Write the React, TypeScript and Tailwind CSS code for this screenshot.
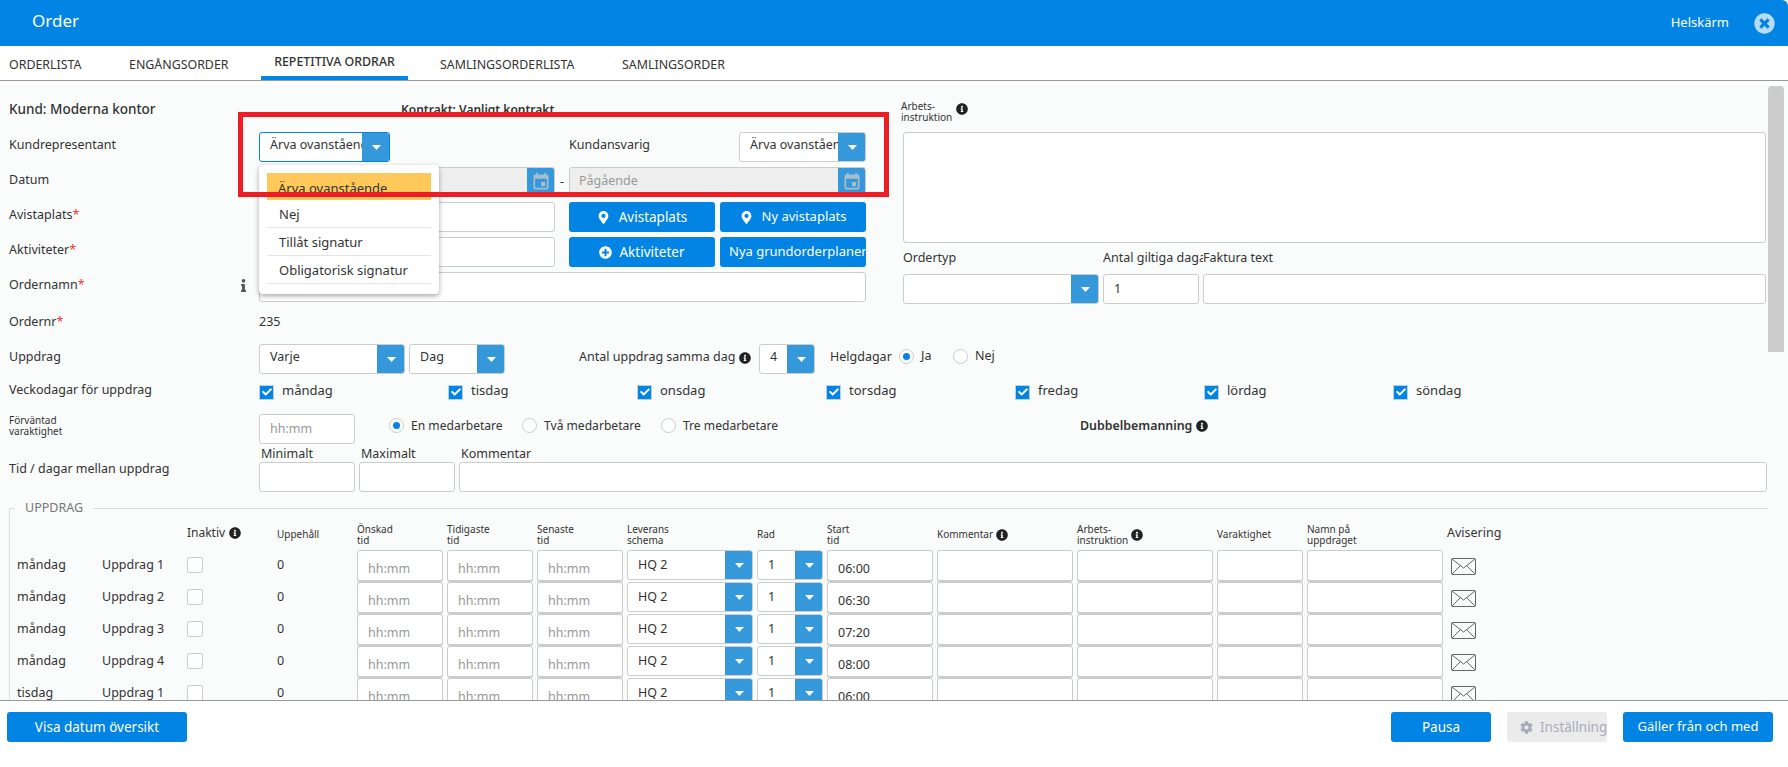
import { FaCheck, FaCog, FaInfo, FaInfoCircle, FaMapMarkerAlt, FaPlusCircle, FaTimesCircle } from "react-icons/fa";
import { MdEvent } from "react-icons/md";

const tabs = [
  { label: "ORDERLISTA", className: "ml-[9px] w-[120px]" },
  { label: "ENGÅNGSORDER", className: "w-[132px]" },
  { label: "REPETITIVA ORDRAR", active: true },
  { label: "SAMLINGSORDERLISTA", className: "ml-[32px] w-[182px]" },
  { label: "SAMLINGSORDER", className: "" },
];

const weekdays = ["måndag", "tisdag", "onsdag", "torsdag", "fredag", "lördag", "söndag"];

const missions = [
  { day: "måndag", name: "Uppdrag 1", start: "06:00" },
  { day: "måndag", name: "Uppdrag 2", start: "06:30" },
  { day: "måndag", name: "Uppdrag 3", start: "07:20" },
  { day: "måndag", name: "Uppdrag 4", start: "08:00" },
  { day: "tisdag", name: "Uppdrag 1", start: "06:00" },
];

function Select(props: { text?: string; className: string; focus?: boolean; textClass?: string }) {
  return (
    <div
      className={`flex h-[30px] shrink-0 overflow-hidden rounded-[3px] border bg-white ${
        props.focus ? "border-[#0284e4]" : "border-[#ccc]"
      } ${props.className}`}
    >
      <div className={`min-w-0 flex-1 overflow-hidden whitespace-nowrap pl-[10px] leading-[24px] ${props.textClass ?? ""}`}>
        {props.text}
      </div>
      <div className="-my-px -mr-px flex w-[28px] shrink-0 items-center justify-center bg-[#3598db]">
        <svg width="9" height="5" viewBox="0 0 9 5" fill="#fff">
          <path d="M0 0h9L4.5 5z" />
        </svg>
      </div>
    </div>
  );
}

function Input(props: { className: string; placeholder?: string; value?: string }) {
  return (
    <div
      className={`flex h-[30px] shrink-0 items-center rounded-[3px] border border-[#ccc] bg-white pl-[10px] ${
        props.placeholder ? "text-[#999]" : ""
      } ${props.className}`}
    >
      {props.placeholder ?? props.value}
    </div>
  );
}

function DateField(props: { text?: string; className: string }) {
  return (
    <div className={`flex h-[30px] shrink-0 overflow-hidden rounded-[3px] border border-[#ccc] bg-[#eee] ${props.className}`}>
      <div className="flex-1 pl-[9px] leading-[26px] text-[#999]">{props.text}</div>
      <div className="-my-px -mr-px flex w-[28px] items-center justify-center bg-[#3598db] text-[#a9bcc9]">
        <MdEvent size={20} />
      </div>
    </div>
  );
}

function BlueButton(props: { children: React.ReactNode; className: string }) {
  return (
    <button className={`flex h-[30px] shrink-0 items-center justify-center overflow-hidden whitespace-nowrap rounded-[3px] bg-[#0284e4] text-[13.5px] text-white ${props.className}`}>
      {props.children}
    </button>
  );
}

function Row(props: { label: React.ReactNode; children?: React.ReactNode; className?: string }) {
  return (
    <div className={`flex h-[30px] items-center ${props.className ?? "mb-[5px]"}`}>
      <div className="w-[259px] shrink-0 pb-[3px] pl-[9px]">{props.label}</div>
      {props.children}
    </div>
  );
}

function Required(props: { text: string }) {
  return (
    <>
      {props.text}
      <span className="text-[#e33]">*</span>
    </>
  );
}

function Info(props: { className?: string }) {
  return <FaInfoCircle size={12} className={`shrink-0 text-[#222] ${props.className ?? ""}`} />;
}

function Radio(props: { label: string; checked?: boolean; className: string }) {
  return (
    <div className={`flex shrink-0 items-center gap-[7px] ${props.className}`}>
      <div className="flex h-[15px] w-[15px] items-center justify-center rounded-full border border-[#ccc] bg-white">
        {props.checked ? <div className="h-[7px] w-[7px] rounded-full bg-[#0284e4]" /> : null}
      </div>
      <span>{props.label}</span>
    </div>
  );
}

function Envelope() {
  return (
    <svg width="25" height="17" viewBox="0 0 25 17" fill="none" stroke="#666" strokeWidth="1" className="ml-[4px]">
      <rect x="0.5" y="0.5" width="24" height="16" rx="1" />
      <path d="M1 1l11.5 9L24 1M1 16l8.5-8.5M24 16l-8.5-8.5" />
    </svg>
  );
}

function SmallHead(props: { children: React.ReactNode }) {
  return <div className="flex items-center gap-[3px] pt-[2px] text-[10px] leading-[11.5px]">{props.children}</div>;
}

export default function App() {
  return (
    <div className="relative flex h-[767px] w-[1788px] flex-col overflow-hidden bg-white font-['Noto_Sans','Open_Sans',sans-serif] text-[12.5px] text-[#333]">
      <header className="flex h-[46px] shrink-0 items-center rounded-tr-[6px] bg-[#0284e4] text-white">
        <div className="ml-[32px] pb-[4px] text-[17px]">Order</div>
        <div className="ml-auto text-[13px]">Helskärm</div>
        <FaTimesCircle size={21} className="mr-[13px] ml-[25px] text-[#b5dcf9]" />
      </header>

      <nav className="flex h-[35px] shrink-0 border-b border-[#999] text-[12.4px]">
        {tabs.map((t) =>
          t.active ? (
            <div key={t.label} className="flex w-[147px] justify-center border-b-[4px] border-[#0284e4] pt-[6px] font-medium leading-[20px]">
              {t.label}
            </div>
          ) : (
            <div key={t.label} className={`pt-[9px] leading-[20px] ${t.className}`}>
              {t.label}
            </div>
          ),
        )}
      </nav>

      <main className="mt-[4px] flex min-h-0 flex-1 border-b border-[#999] bg-[#fafbfb]">
        <div className="w-[1768px] shrink-0 overflow-hidden">
          <div className="flex">
            <div className="w-[866px] shrink-0 pt-[9px]">
              <div className="mb-[8px] flex h-[30px] items-center pt-[1px]">
                <div className="w-[401px] pl-[9px] text-[13.5px] font-medium">Kund: Moderna kontor</div>
                <div className="text-[12px] font-semibold">Kontrakt: Vanligt kontrakt</div>
              </div>
              <Row label="Kundrepresentant">
                <Select text="Ärva ovanstående" focus className="w-[131px]" />
                <div className="ml-[179px] w-[170px] pb-[4px]">Kundansvarig</div>
                <Select text="Ärva ovanstående" className="w-[127px]" />
              </Row>
              <Row label="Datum">
                <DateField className="w-[296px]" />
                <div className="w-[14px] text-center">-</div>
                <DateField text="Pågående" className="w-[297px]" />
              </Row>
              <Row label={<Required text="Avistaplats" />}>
                <Input className="w-[296px]" />
                <BlueButton className="ml-[14px] w-[146px] gap-[9px]">
                  <FaMapMarkerAlt size={13} />
                  Avistaplats
                </BlueButton>
                <BlueButton className="ml-[5px] w-[146px] gap-[9px] !text-[13px]">
                  <FaMapMarkerAlt size={13} />
                  Ny avistaplats
                </BlueButton>
              </Row>
              <Row label={<Required text="Aktiviteter" />}>
                <Input className="w-[296px]" />
                <BlueButton className="ml-[14px] w-[146px] gap-[7px]">
                  <FaPlusCircle size={13} />
                  Aktiviteter
                </BlueButton>
                <BlueButton className="ml-[5px] w-[146px] !justify-start pl-[9px] !text-[13px]">Nya grundorderplaner</BlueButton>
              </Row>
              <Row
                label={
                  <div className="relative">
                    <Required text="Ordernamn" />
                    <FaInfo size={13} className="absolute top-[3px] left-[228px] text-[#555]" />
                  </div>
                }
                className=""
              >
                <Input className="w-[607px]" />
              </Row>
            </div>

            <div className="ml-[37px] w-[863px] shrink-0">
              <div className="mt-[16px] -ml-[2px] flex h-[31px] items-start gap-[4px]">
                <div className="text-[10px] leading-[11px]">
                  Arbets-
                  <br />
                  instruktion
                </div>
                <Info className="mt-[2px]" />
              </div>
              <div className="h-[111px] rounded-[3px] border border-[#ccc] bg-white" />
              <div className="flex h-[31px] items-center whitespace-nowrap">
                <div className="w-[200px]">Ordertyp</div>
                <div className="w-[100px] overflow-hidden">Antal giltiga dagar</div>
                <div>Faktura text</div>
              </div>
              <div className="flex gap-[4px]">
                <Select className="w-[196px]" />
                <Input value="1" className="w-[96px]" />
                <Input className="w-[563px]" />
              </div>
            </div>
          </div>

          <Row label={<Required text="Ordernr" />} className="mt-[5px] mb-[5px]">
            <div className="pb-[4px]">235</div>
          </Row>

          <Row label="Uppdrag" className="mb-[3px]">
            <Select text="Varje" className="w-[146px]" />
            <Select text="Dag" className="ml-[4px] w-[96px]" />
            <div className="ml-[74px] flex w-[180px] items-center gap-[4px] pb-[3px]">
              Antal uppdrag samma dag
              <Info />
            </div>
            <Select text="4" className="w-[56px]" />
            <div className="ml-[15px] w-[69px] pb-[3px]">Helgdagar</div>
            <Radio label="Ja" checked className="w-[54px] pb-[6px]" />
            <Radio label="Nej" className="pb-[6px]" />
          </Row>

          <Row label="Veckodagar för uppdrag" className="mb-[7px]">
            {weekdays.map((d) => (
              <div key={d} className="flex w-[189px] shrink-0 items-center gap-[8px]">
                <div className="flex h-[15px] w-[15px] items-center justify-center border border-[#b9d3e6] bg-[#0284e4] text-white">
                  <FaCheck size={10} />
                </div>
                <span className="pb-[2px] text-[13px]">{d}</span>
              </div>
            ))}
          </Row>

          <div className="flex h-[30px] items-center">
            <div className="w-[259px] shrink-0 pb-[6px] pl-[9px] text-[10px] leading-[11.5px]">
              Förväntad
              <br />
              varaktighet
            </div>
            <Input placeholder="hh:mm" className="w-[96px]" />
            <Radio label="En medarbetare" checked className="ml-[34px] w-[133px] pb-[6px] text-[12.1px]" />
            <Radio label="Två medarbetare" className="w-[139px] pb-[6px] text-[12.1px]" />
            <Radio label="Tre medarbetare" className="w-[419px] pb-[6px] text-[12.1px]" />
            <div className="flex items-center gap-[4px] pb-[5px] text-[12.4px] font-semibold">
              Dubbelbemanning
              <Info />
            </div>
          </div>

          <div className="flex items-end">
            <div className="mb-[9px] w-[259px] shrink-0 pb-[4px] pl-[9px]">Tid / dagar mellan uppdrag</div>
            <div className="flex gap-[4px]">
              <div className="w-[96px]">
                <div className="h-[18px] pl-[2px] leading-[20px]">Minimalt</div>
                <Input className="w-[96px]" />
              </div>
              <div className="w-[96px]">
                <div className="h-[18px] pl-[2px] leading-[20px]">Maximalt</div>
                <Input className="w-[96px]" />
              </div>
              <div className="w-[1308px]">
                <div className="h-[18px] pl-[2px] leading-[20px]">Kommentar</div>
                <Input className="w-[1308px]" />
              </div>
            </div>
          </div>

          <fieldset className="mt-[6px] ml-[9px] w-[1762px] border border-[#ddd] pl-[7px]">
            <legend className="-ml-[2px] px-[10px] leading-[20px] text-[#777]">UPPDRAG</legend>
            <div className="grid grid-cols-[81px_81px_86px_76px_86px_86px_86px_126px_66px_106px_136px_136px_86px_136px_auto] gap-x-[4px] auto-rows-[32px]">
              <div className="col-span-2" />
              <div className="flex items-center gap-[4px] self-start pt-[6px] text-[12px]">
                Inaktiv
                <Info />
              </div>
              <SmallHead>Uppehåll</SmallHead>
              <SmallHead>Önskad<br />tid</SmallHead>
              <SmallHead>Tidigaste<br />tid</SmallHead>
              <SmallHead>Senaste<br />tid</SmallHead>
              <SmallHead>Leverans<br />schema</SmallHead>
              <SmallHead>Rad</SmallHead>
              <SmallHead>Start<br />tid</SmallHead>
              <SmallHead>Kommentar<Info /></SmallHead>
              <SmallHead>
                <div>Arbets-<br />instruktion</div>
                <Info />
              </SmallHead>
              <SmallHead>Varaktighet</SmallHead>
              <SmallHead>Namn på<br />uppdraget</SmallHead>
              <div className="flex items-center pb-[2px] text-[12.5px]">Avisering</div>

              {missions.map((m, i) => (
                <Mission key={i} day={m.day} name={m.name} start={m.start} />
              ))}
            </div>
          </fieldset>
        </div>

        <div className="mt-px h-[266px] w-[16px] rounded-t-[4px] bg-[#ccc]" />
      </main>

      <footer className="flex h-[66px] shrink-0 pt-[11px] pr-[15px] pl-[7px]">
        <BlueButton className="w-[180px]">Visa datum översikt</BlueButton>
        <BlueButton className="ml-auto w-[100px]">Pausa</BlueButton>
        <div className="ml-[16px] flex h-[30px] w-[100px] items-center gap-[7px] overflow-hidden whitespace-nowrap rounded-[3px] bg-[#ebebeb] pl-[13px] text-[13.5px] text-[#aab]">
          <FaCog size={13} className="shrink-0" />
          Inställningar
        </div>
        <BlueButton className="ml-[16px] w-[150px] !text-[13px]">Gäller från och med</BlueButton>
      </footer>

      <div className="absolute top-[165px] left-[259px] h-[129px] w-[180px] rounded-[4px] bg-white px-[8px] pt-[8px] text-[13px] shadow-[0_2px_5px_rgba(0,0,0,0.35)]">
        <div className="h-[27px] bg-[#fec95a] pl-[11px] leading-[30px]">Ärva ovanstående</div>
        <div className="h-[28px] border-b border-[#e5e5e5] pl-[12px] leading-[28px]">Nej</div>
        <div className="h-[28px] border-b border-[#e5e5e5] pl-[12px] leading-[28px]">Tillåt signatur</div>
        <div className="h-[28px] border-b border-[#e5e5e5] pl-[12px] leading-[28px]">Obligatorisk signatur</div>
      </div>

      <div className="absolute top-[112px] left-[238px] h-[85px] w-[651px] border-[5px] border-[#ee1c25]" />
    </div>
  );
}

function Mission(props: { day: string; name: string; start: string }) {
  const box = "h-[32px] rounded-[3px] border border-b-2 border-[#ccc] bg-white pl-[10px] leading-[35px]";
  return (
    <>
      <div className="pt-[6px]">{props.day}</div>
      <div className="pt-[6px]">{props.name}</div>
      <div className="pt-[7px]">
        <div className="h-[16px] w-[16px] rounded-[2px] border border-[#ccc] bg-white" />
      </div>
      <div className="pt-[6px]">0</div>
      <div className={`${box} text-[#999]`}>hh:mm</div>
      <div className={`${box} text-[#999]`}>hh:mm</div>
      <div className={`${box} text-[#999]`}>hh:mm</div>
      <Select text="HQ 2" className="w-[126px]" textClass="pt-[2px]" />
      <Select text="1" className="w-[66px]" textClass="pt-[2px]" />
      <div className={box}>{props.start}</div>
      <div className={box} />
      <div className={box} />
      <div className={box} />
      <div className={box} />
      <div className="pt-[8px]">
        <Envelope />
      </div>
    </>
  );
}
